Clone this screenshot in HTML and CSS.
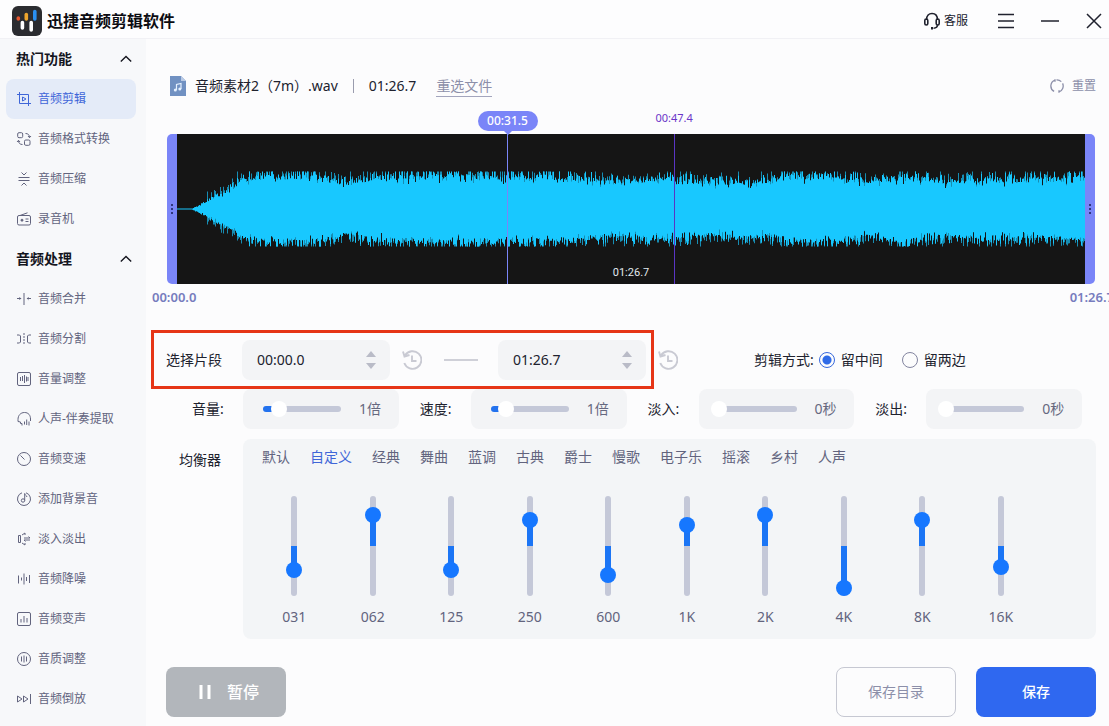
FILE: index.html
```html
<!DOCTYPE html>
<html lang="zh-CN">
<head>
<meta charset="utf-8">
<title>迅捷音频剪辑软件</title>
<link rel="stylesheet" href="styles.css">
</head>
<body>
<div class="app">
  <header class="titlebar">
    <svg class="logo" viewBox="0 0 30 30" aria-hidden="true">
      <rect width="30" height="30" rx="6" fill="#2b2c30"/>
      <g stroke-linecap="round" stroke-width="3.600">
        <path d="M6.300 12v1" stroke="#e5562f"/>
        <path d="M14.300 8.500v4.500" stroke="#eda52d"/>
        <path d="M22.800 5.500v7.500" stroke="#2a8ff0"/>
        <path d="M10.400 16.500v5.500M19.200 16.500v7.500" stroke="#fff"/>
      </g>
    </svg>
    <h1 class="app-name">迅捷音频剪辑软件</h1>
    <button class="service" type="button">
      <svg class="service-icon" viewBox="0 0 18 18" aria-hidden="true"><path d="M3.500 8C3.500 3.500 6 1.500 9 1.500S14.500 3.500 14.500 8" /><rect x="1.800" y="7" width="3" height="6" rx="1.500"/><rect x="13.200" y="7" width="3" height="6" rx="1.500"/><path d="M14.500 13c0 2-1.500 3-4 3.200"/><path d="M8 16.200h2" stroke-width="2.600"/></svg>
      <span>客服</span>
    </button>
    <button class="win-btn" type="button" aria-label="菜单"><svg viewBox="0 0 18 18"><path d="M1 2.500h16M1 9h16M1 15.500h16"/></svg></button>
    <button class="win-btn" type="button" aria-label="最小化"><svg viewBox="0 0 18 18"><path d="M0 9h18"/></svg></button>
    <button class="win-btn" type="button" aria-label="关闭"><svg viewBox="0 0 18 18"><path d="M2 2l14 14M16 2L2 16"/></svg></button>
  </header>

  <div class="body">
    <nav class="sidebar">
      <button class="group" type="button"><span>热门功能</span><svg class="chevron" viewBox="0 0 12 8"><path d="M.8 6.500L6 1.500l5.200 5"/></svg></button>
      <a class="item active" href="#cut"><svg class="icon" viewBox="0 0 14 14"><path d="M2.500 0v11.500H14M0 2.500h11.500V14M5.500 5v4L9 7z"/></svg>音频剪辑</a>
      <a class="item" href="#convert"><svg class="icon" viewBox="0 0 14 14"><rect x=".7" y=".7" width="5" height="5" rx="1.300"/><rect x="7.500" y="8" width="5.500" height="5.300" rx="1.300"/><path d="M8.500 1.500c2.500 0 4 1.300 4 4M11 4l1.500 1.700L14 4M5.500 12.500c-2.500 0-4-1.300-4-4M0 10l1.500-1.700L3 10"/></svg>音频格式转换</a>
      <a class="item" href="#compress"><svg class="icon" viewBox="0 0 14 14"><path d="M1.500 5.500h11M1.500 8.500h11M4.500.5L7 3 9.500.5M4.500 13.500L7 11l2.500 2.500"/></svg>音频压缩</a>
      <a class="item" href="#record"><svg class="icon" viewBox="0 0 14 14"><rect x=".5" y="3.500" width="13" height="9.500" rx="1.500"/><path d="M3 3.500L10.500.8M8.500 7h3M8.500 9.500h3"/><circle cx="5" cy="8.200" r="1" fill="currentColor"/></svg>录音机</a>

      <button class="group" type="button"><span>音频处理</span><svg class="chevron" viewBox="0 0 12 8"><path d="M.8 6.500L6 1.500l5.200 5"/></svg></button>
      <a class="item" href="#merge"><svg class="icon" viewBox="0 0 14 14"><path d="M7 1v12M0 6.500h4M10 6.500h4M2.500 5.300L3.700 6.500 2.500 7.700M11.500 5.300L10.300 6.500l1.200 1.200"/></svg>音频合并</a>
      <a class="item" href="#split"><svg class="icon" viewBox="0 0 14 14"><path d="M0 3h2.500l1 1v6l-1 1H0M14 3h-2.500l-1 1v6l1 1H14"/><path d="M7 1v12" stroke-dasharray="2 1"/></svg>音频分割</a>
      <a class="item" href="#volume"><svg class="icon" viewBox="0 0 14 14"><rect x=".5" y=".5" width="13" height="13" rx="1.500"/><path d="M3.500 5v4M5.500 4v5M7.500 3v8M9.500 4.500v5M11 5v4"/></svg>音量调整</a>
      <a class="item" href="#vocals"><svg class="icon" viewBox="0 0 14 14"><path d="M5 11.500H3.500V10L1 9.500V7.500C1 3.500 3.500.5 7.500.5s6 2.800 6 6.500V9M5 11.500v2M7.500 9.500v3M9.700 7.500v5.500M12 9.500v4"/></svg>人声-伴奏提取</a>
      <a class="item" href="#speed"><svg class="icon" viewBox="0 0 14 14"><circle cx="7" cy="7" r="6.500"/><path d="M3.500 3.500L7.500 7.500"/></svg>音频变速</a>
      <a class="item" href="#bgm"><svg class="icon" viewBox="0 0 14 14"><path d="M5 .8a6.500 6.500 0 1 0 4 0"/><circle cx="6" cy="8.500" r="1.700"/><path d="M7.700 8.500V1.500c.3 2 2 2 2.300 3.500"/></svg>添加背景音</a>
      <a class="item" href="#fade"><svg class="icon" viewBox="0 0 14 14"><path d="M1.500 3.500h2v7h-2zM5 3L8 1v2M5 11l3 2v-2M7 6h6l-1.500-1.500M13 8H7l1.500 1.500"/></svg>淡入淡出</a>
      <a class="item" href="#denoise"><svg class="icon" viewBox="0 0 14 14"><path d="M1.500 3.500v8M4.500 5.500v3M7 1.500v11M9.500 5v4M12.500 3v8"/></svg>音频降噪</a>
      <a class="item" href="#voice"><svg class="icon" viewBox="0 0 14 14"><rect x=".5" y=".5" width="13" height="13" rx="1.500"/><path d="M4 7v3.500M7 4v6.500M10 6v4.500"/></svg>音频变声</a>
      <a class="item" href="#quality"><svg class="icon" viewBox="0 0 14 14"><circle cx="7" cy="7" r="6.500"/><path d="M4.500 4.500v5M7 3.500v7M9.500 4.500v5"/></svg>音质调整</a>
      <a class="item" href="#reverse"><svg class="icon" viewBox="0 0 14 14"><path d="M.5 4v6L5 7zM6.500 4v6L11 7zM13.500 2v10"/></svg>音频倒放</a>
    </nav>

    <main class="editor">
      <section class="file-row">
        <svg class="file-icon" viewBox="0 0 16 20" aria-hidden="true"><path d="M0 0h11l5 5v15H0z" fill="#7191c2"/><path d="M11 0l5 5h-5z" fill="#b9cae5"/><path d="M6.500 14V8.500l4.500-1V13" fill="none" stroke="#e5f1ff" stroke-width="1.200"/><circle cx="5.300" cy="14" r="1.500" fill="#e5f1ff"/><circle cx="9.800" cy="13" r="1.500" fill="#e5f1ff"/></svg>
        <span class="file-name">音频素材2（7m）.wav</span>
        <span class="divider"></span>
        <span class="file-length">01:26.7</span>
        <a class="reselect" href="#file">重选文件</a>
        <button class="reset" type="button"><svg viewBox="0 0 14 14" aria-hidden="true"><path d="M5 1.100A6.200 6.200 0 0 0 4.100 12.400M9 12.900A6.200 6.200 0 0 0 12.600 4.400M11.300 2.600A6.200 6.200 0 0 0 6.500.8M5 .3v2.500M9 11.200v2.500"/></svg><span>重置</span></button>
      </section>

      <section class="timeline">
        <button class="handle left" type="button" aria-label="起点"><i></i><i></i><i></i></button>
        <div class="wave">
          <svg class="wave-svg" viewBox="0 0 908 150" preserveAspectRatio="none" aria-hidden="true"><path id="wave-soft"/><path id="wave-main"/></svg>
          <span class="wave-length">01:26.7</span>
          <div class="marker" style="left:54.700%"><span>00:47.4</span></div>
          <div class="playhead" style="left:36.350%"><span>00:31.5</span></div>
        </div>
        <button class="handle right" type="button" aria-label="终点"><i></i><i></i><i></i></button>
      </section>
      <div class="scale"><span>00:00.0</span><span>01:26.7</span></div>

      <section class="segment-row">
        <div class="segment">
          <label for="start">选择片段</label>
          <div class="time-box"><input id="start" type="text" value="00:00.0"><span class="spin"><button type="button" aria-label="增加"></button><button type="button" aria-label="减少"></button></span></div>
          <button class="history" type="button" aria-label="设为当前起点"><svg viewBox="0 0 20 20"><path d="M3 5.500A8.800 8.800 0 1 1 2.300 13M1 1.500L2.500 6.500 7.500 5M10 5.500V11h4.500"/></svg></button>
          <span class="dash"></span>
          <div class="time-box end"><input type="text" value="01:26.7" aria-label="片段终点"><span class="spin"><button type="button" aria-label="增加"></button><button type="button" aria-label="减少"></button></span></div>
        </div>
        <button class="history outer" type="button" aria-label="设为当前终点"><svg viewBox="0 0 20 20"><path d="M3 5.500A8.800 8.800 0 1 1 2.300 13M1 1.500L2.500 6.500 7.500 5M10 5.500V11h4.500"/></svg></button>
        <div class="mode" role="radiogroup" aria-label="剪辑方式">
          <span>剪辑方式:</span>
          <label><input type="radio" name="mode" checked>留中间</label>
          <label><input type="radio" name="mode">留两边</label>
        </div>
      </section>

      <section class="params">
        <div class="param"><label for="vol">音量:</label><div class="param-box"><span class="slider" style="--fill:20%"><input id="vol" type="range" value="20"></span><output for="vol">1倍</output></div></div>
        <div class="param"><label for="rate">速度:</label><div class="param-box"><span class="slider" style="--fill:20%"><input id="rate" type="range" value="20"></span><output for="rate">1倍</output></div></div>
        <div class="param"><label for="fin">淡入:</label><div class="param-box"><span class="slider" style="--fill:0%"><input id="fin" type="range" value="0"></span><output for="fin">0秒</output></div></div>
        <div class="param"><label for="fout">淡出:</label><div class="param-box"><span class="slider" style="--fill:0%"><input id="fout" type="range" value="0"></span><output for="fout">0秒</output></div></div>
      </section>

      <section class="eq">
        <h2 class="eq-title">均衡器</h2>
        <div class="eq-panel">
          <div class="presets">
            <button type="button">默认</button><button type="button" class="on">自定义</button><button type="button">经典</button><button type="button">舞曲</button><button type="button">蓝调</button><button type="button">古典</button><button type="button">爵士</button><button type="button">慢歌</button><button type="button">电子乐</button><button type="button">摇滚</button><button type="button">乡村</button><button type="button">人声</button>
          </div>
          <div class="bands">
            <label class="band"><span class="vslider" style="--a:50%;--b:74%"><input type="range" min="-42" max="42" value="-24"></span>031</label>
            <label class="band"><span class="vslider" style="--a:19%;--b:50%"><input type="range" min="-42" max="42" value="31"></span>062</label>
            <label class="band"><span class="vslider" style="--a:50%;--b:74%"><input type="range" min="-42" max="42" value="-24"></span>125</label>
            <label class="band"><span class="vslider" style="--a:24%;--b:50%"><input type="range" min="-42" max="42" value="26"></span>250</label>
            <label class="band"><span class="vslider" style="--a:50%;--b:79%"><input type="range" min="-42" max="42" value="-29"></span>600</label>
            <label class="band"><span class="vslider" style="--a:29%;--b:50%"><input type="range" min="-42" max="42" value="21"></span>1K</label>
            <label class="band"><span class="vslider" style="--a:19%;--b:50%"><input type="range" min="-42" max="42" value="31"></span>2K</label>
            <label class="band"><span class="vslider" style="--a:50%;--b:92%"><input type="range" min="-42" max="42" value="-42"></span>4K</label>
            <label class="band"><span class="vslider" style="--a:24%;--b:50%"><input type="range" min="-42" max="42" value="26"></span>8K</label>
            <label class="band"><span class="vslider" style="--a:50%;--b:71%"><input type="range" min="-42" max="42" value="-21"></span>16K</label>
          </div>
        </div>
      </section>

      <footer class="actions">
        <button class="btn pause" type="button"><svg viewBox="0 0 12 16" aria-hidden="true"><path d="M2 1v14M10 1v14"/></svg>暂停</button>
        <button class="btn outline" type="button">保存目录</button>
        <button class="btn primary" type="button">保存</button>
      </footer>
    </main>
  </div>
</div>
<script src="wave.js"></script>
</body>
</html>
```

FILE: styles.css
```css
* { box-sizing: border-box; }

body {
  margin: 0;
  background: #fcfcfd;
  color: #20222e;
  font: 14px/20px "Noto Sans", "Noto Sans CJK SC", sans-serif;
}

button {
  margin: 0;
  padding: 0;
  border: 0;
  background: none;
  color: inherit;
  font: inherit;
}

svg { display: block; fill: none; stroke: currentColor; }
a { color: inherit; text-decoration: none; }

.app { display: flex; flex-direction: column; min-height: 100vh; overflow: hidden; }

/* title bar */
.titlebar {
  display: flex;
  align-items: center;
  height: 39px;
  padding: 3px 6px 0 12px;
  border-bottom: 1px solid #f1f1f5;
  background: #fdfdfe;
}
.logo { width: 30px; height: 30px; stroke: none; }
.app-name { margin: 0 auto 0 5px; font-size: 16px; font-weight: 700; color: #0c0c12; }
.service { display: flex; align-items: center; gap: 3px; margin-right: 29px; font-size: 12px; }
.service-icon { width: 18px; height: 18px; stroke-width: 1.6; }
.win-btn { margin-left: 26px; }
.service + .win-btn { margin-left: 0; }
.win-btn svg { width: 18px; height: 18px; stroke-width: 1.5; }

.body { display: flex; flex: 1; }

/* sidebar */
.sidebar { flex: none; width: 146px; padding: 0 10px 0 6px; background: #f7f8fa; }
.group {
  display: flex;
  align-items: center;
  justify-content: space-between;
  width: 100%;
  height: 40px;
  padding: 0 4px 0 10px;
  font-weight: 700;
  color: #15161f;
}
.chevron { width: 12px; height: 8px; stroke-width: 1.4; }
.item {
  display: flex;
  align-items: center;
  gap: 7px;
  height: 40px;
  padding-left: 11px;
  border-radius: 8px;
  font-size: 12px;
  color: #62647e;
}
.item.active { background: #e4ebf8; color: #3f66d8; }
.icon { width: 14px; height: 14px; overflow: visible; }

/* editor */
.editor { flex: 1; min-width: 0; padding: 31px 13px 9px 5px; }

.file-row { display: flex; align-items: center; height: 32px; padding-left: 19px; }
.file-icon { width: 16px; height: 20px; margin-right: 9px; stroke: none; }
.divider { width: 1px; height: 14px; margin: 0 15px; background: #9a9cae; }
.reselect { margin-left: 20px; border-bottom: 1px solid #a3a5bd; color: #8c8fa9; line-height: 20px; }
.reset { display: flex; align-items: center; gap: 8px; margin-left: auto; font-size: 12px; color: #8c8fa9; }
.reset svg { width: 14px; height: 14px; stroke-width: 1.3; }

.timeline { display: flex; margin: 32px 1px 0 16px; }
.handle {
  display: flex;
  flex: none;
  flex-direction: column;
  align-items: center;
  justify-content: center;
  gap: 2px;
  width: 10px;
  background: #7a85f8;
}
.handle.left { border-radius: 5px 0 0 5px; }
.handle.right { border-radius: 0 5px 5px 0; }
.handle i { width: 2px; height: 2px; background: #30367e; }
.wave { position: relative; flex: 1; height: 150px; background: #151515; }
.wave-svg { width: 100%; height: 150px; stroke: none; }
#wave-main { fill: #18c8ff; }
#wave-soft { fill: #178db3; }
.wave-length { position: absolute; bottom: 4px; left: 0; right: 0; text-align: center; font: 11px/14px Roboto, sans-serif; color: #e1e9ee; }
.marker, .playhead { position: absolute; top: 0; bottom: 0; width: 1px; }
.marker { background: #5a35c4; }
.marker span { position: absolute; bottom: 100%; left: 50%; margin-bottom: 8px; transform: translateX(-50%); font-size: 11px; line-height: 16px; color: #6a35c8; }
.playhead { background: #7a85f8; }
.playhead span {
  position: absolute;
  bottom: 100%;
  left: 50%;
  width: 60px;
  margin-bottom: 3px;
  transform: translateX(-50%);
  border-radius: 10px;
  background: #7a85f8;
  color: #fff;
  font-size: 12px;
  font-weight: 500;
  line-height: 20px;
  text-align: center;
}
.playhead span::after {
  content: "";
  position: absolute;
  top: 100%;
  left: 26px;
  border: 4px solid transparent;
  border-top-color: #7a85f8;
  border-bottom-width: 0;
}
.scale {
  display: flex;
  justify-content: space-between;
  margin: 0 -18px 20px 1px;
  font-size: 13px;
  font-weight: 600;
  line-height: 26px;
  color: #777cbe;
}

/* segment */
.segment-row { display: flex; align-items: center; }
.segment { display: flex; align-items: center; height: 59px; padding: 0 5px 0 12px; border: 3px solid #e63517; }
.segment label { margin-right: 20px; }
.time-box { display: flex; align-items: center; width: 148px; height: 40px; padding: 0 14px 0 15px; border-radius: 8px; background: #f3f4f6; }
.time-box input { flex: 1; min-width: 0; padding: 0; border: 0; background: none; color: inherit; font: inherit; }
.spin { display: flex; flex-direction: column; gap: 6px; }
.spin button { border: 5px solid transparent; }
.spin button:first-child { border-top: 0; border-bottom: 6px solid #b9bbc7; }
.spin button:last-child { border-bottom: 0; border-top: 6px solid #b9bbc7; }
.history { margin: 0 22px 0 12px; color: #c9cad3; }
.history svg { width: 20px; height: 20px; stroke-width: 1.9; }
.history.outer { margin: 0 0 0 4px; }
.dash { width: 34px; height: 2px; margin-right: 20px; background: #cfd0d8; }
.mode { display: flex; align-items: center; margin-left: 76px; }
.mode label { display: flex; align-items: center; gap: 6px; margin-left: 5px; }
.mode label + label { margin-left: 19px; }
.mode input {
  appearance: none;
  width: 16px;
  height: 16px;
  margin: 0;
  border: 1px solid #8385a0;
  border-radius: 50%;
}
.mode input:checked { border-color: #3768dc; background: radial-gradient(circle, #2f6be8 4px, transparent 5px); }

/* parameters */
.params { display: grid; grid-template-columns: repeat(4, 1fr); gap: 21px; padding: 0 14px 0 41px; }
.param { display: flex; align-items: center; }
.param label { flex: none; width: 32px; margin-right: 19px; }
.param-box { display: flex; flex: 1; align-items: center; min-width: 0; height: 40px; padding-left: 12px; border-radius: 8px; background: #f3f4f6; }
.param output { margin-left: 10px; color: #66687f; }
.slider { position: relative; width: 94px; height: 16px; }
.slider::before {
  content: "";
  position: absolute;
  inset: 5px 8px;
  border-radius: 3px;
  background: linear-gradient(to right, #2372ee var(--fill), #c4c8d8 var(--fill));
}
.slider input { position: relative; display: block; appearance: none; width: 100%; height: 16px; margin: 0; background: none; }
.slider input::-webkit-slider-thumb { appearance: none; width: 16px; height: 16px; border-radius: 50%; background: #fff; }

/* equalizer */
.eq { display: flex; margin-top: 10px; }
.eq-title { flex: none; width: 92px; margin: 11px 0 0; padding-left: 28px; font-size: 14px; font-weight: 400; }
.eq-panel { flex: 1; height: 200px; border-radius: 8px; background: #f3f5f7; }
.presets { display: flex; gap: 20px; padding: 8px 0 0 19px; color: #62647e; }
.presets .on { color: #3f66d8; }
.bands { display: grid; grid-template-columns: repeat(10, 1fr); margin-top: 29px; padding: 0 56px 0 12px; color: #62647e; }
.band { display: flex; flex-direction: column; align-items: center; gap: 11px; }
.vslider { position: relative; width: 16px; height: 100px; }
.vslider::before {
  content: "";
  position: absolute;
  inset: 0 5px;
  border-radius: 3px;
  background: linear-gradient(to bottom, #c4c8d8 var(--a), #1b75f5 var(--a) var(--b), #c4c8d8 var(--b));
}
.vslider input { position: relative; display: block; appearance: none; writing-mode: vertical-lr; direction: rtl; width: 16px; height: 100px; margin: 0; background: none; }
.vslider input::-webkit-slider-thumb { appearance: none; width: 16px; height: 16px; border-radius: 50%; background: #1677ff; }

/* actions */
.actions { display: flex; gap: 20px; margin-top: 28px; padding-left: 15px; }
.btn { width: 120px; height: 50px; border-radius: 8px; }
.pause { display: flex; align-items: center; justify-content: center; gap: 16px; margin-right: auto; padding-left: 6px; background: #b2b6bb; color: #fff; font-size: 16px; font-weight: 500; }
.pause svg { width: 12px; height: 16px; stroke-width: 3; }
.outline { border: 1px solid #c6c8d2; color: #8c8fa9; }
.primary { background: #2f68f0; color: #fff; font-weight: 500; }
```

FILE: wave.js
```js
// Draws the clip's amplitude, one column per unit of the 908 x 150 view box.
(function () {
  var seed = 20117;
  function rnd() {
    seed = (seed * 16807) % 2147483647;
    return seed / 2147483647;
  }
  // [x, typical amplitude] along the clip
  var env = [[0, 0], [13, 0], [20, 3], [35, 11], [50, 20], [65, 31], [75, 34], [140, 35], [170, 27], [190, 32],
    [250, 35], [400, 34], [430, 29], [470, 31], [500, 32], [530, 28], [590, 29], [610, 35], [660, 35],
    [690, 29], [730, 35], [770, 29], [800, 31], [860, 31], [908, 33]];
  function level(x) {
    for (var i = 1; i < env.length; i++) {
      if (x <= env[i][0]) {
        var a = env[i - 1], b = env[i];
        return a[1] + (b[1] - a[1]) * (x - a[0]) / (b[0] - a[0]);
      }
    }
    return 33;
  }
  function peak(base) {
    var r = rnd();
    var v = base * (0.84 + 0.18 * rnd());
    if (r < 0.14) v = base * (0.72 + 0.15 * rnd());
    if (r > 0.8) v = base * (1.02 + 0.16 * rnd());
    return Math.max(0.5, Math.min(37.5, v));
  }
  var main = '', soft = '';
  for (var x = 0; x < 908; x++) {
    var base = level(x);
    var t = peak(base), b = peak(base);
    main += 'M' + x + ' ' + (75 - t).toFixed(1) + 'h1V' + (75 + b).toFixed(1) + 'h-1z';
    if (base > 8 && rnd() < 0.5) {
      var st = Math.min(37.5, t + 8 * rnd()), sb = Math.min(37.5, b + 8 * rnd());
      soft += 'M' + x + ' ' + (75 - st).toFixed(1) + 'h1V' + (75 + sb).toFixed(1) + 'h-1z';
    }
  }
  document.getElementById('wave-main').setAttribute('d', main);
  document.getElementById('wave-soft').setAttribute('d', soft);
})();
```
